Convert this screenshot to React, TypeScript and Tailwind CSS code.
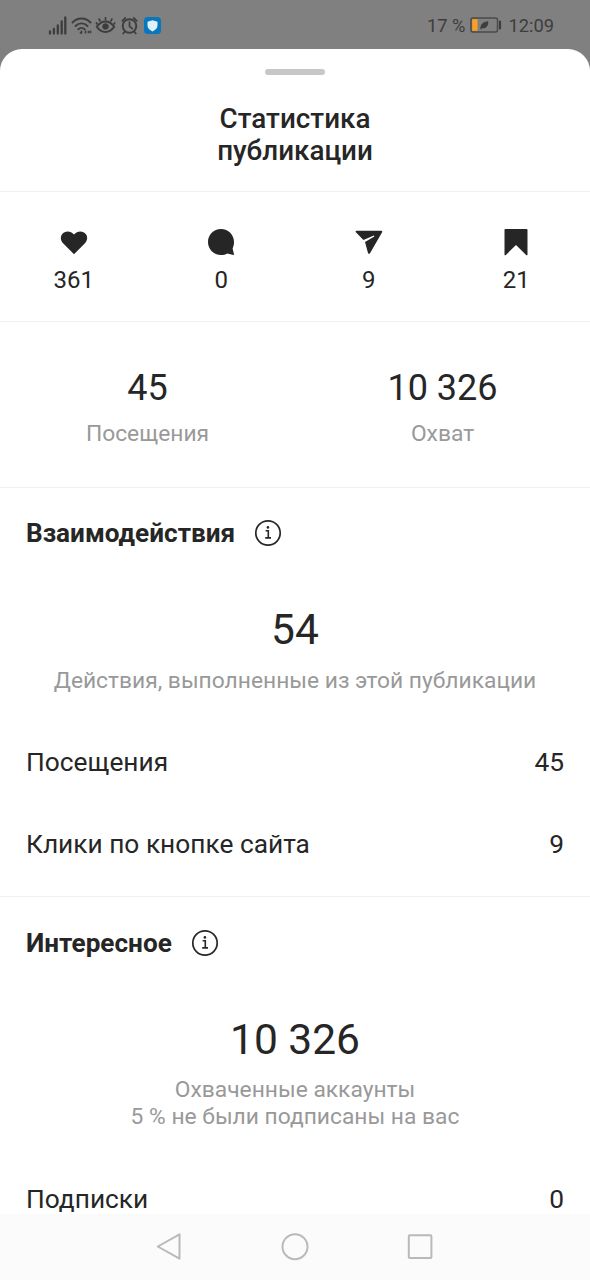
import React from "react";

interface RowProps {
  label: string;
  value: string;
}

const InfoIcon = () => (
  <svg width="28" height="28" viewBox="0 0 28 28" fill="none" stroke="#262626">
    <circle cx="14" cy="14" r="12.2" strokeWidth="1.7" />
    <path d="M11.6 11.8h2.7v7M11.2 18.9h5.8" strokeWidth="1.6" />
    <circle cx="13.9" cy="8.4" r="1.3" fill="#262626" stroke="none" />
  </svg>
);

const SectionTitle = ({ children }: { children: React.ReactNode }) => (
  <div className="flex h-[28px] items-center gap-[19px] px-[26px]">
    <h2 className="text-[26.15px] leading-[28px] font-bold">{children}</h2>
    <InfoIcon />
  </div>
);

const Row: React.FC<RowProps> = ({ label, value }) => (
  <div className="flex h-[82px] items-center justify-between px-[26px] text-[26.3px]">
    <span>{label}</span>
    <span>{value}</span>
  </div>
);

const StatusBar = () => (
  <div className="flex h-[49px] shrink-0 items-center justify-between pl-[48px] pr-[36px] text-[18.3px] text-[#3d3d3d]">
    <div className="flex items-center pt-[1px]">
      <svg width="114" height="24" viewBox="0 0 114 24" fill="none" stroke="#3d3d3d">
        <path d="M2 20.5v-2M5.9 20.5v-4.5M9.8 20.5v-8M13.7 20.5V8.5M17.3 20.5V4.5" strokeWidth="2.3" strokeLinecap="round" />
        <path d="M24.5 9.5c5-5.3 13-5.3 18 0M27.5 13c3.4-3.5 8.7-3.5 12 0M30.3 16.3c1.8-1.7 4.6-1.7 6.4 0" strokeWidth="1.9" strokeLinecap="round" />
        <path d="M33.5 17.5v3M32 19.2l1.5 1.6M37.5 20.5v-3M40.5 17.8v2.4M42.5 17.8v2.4" strokeWidth="1.6" />
        <path d="M48.8 13.8c4.8-7.2 12.6-7.2 17.4 0c-4.8 7-12.6 7-17.4 0Z" strokeWidth="2" />
        <circle cx="57.5" cy="13.5" r="2.8" fill="#3d3d3d" />
        <path d="M57.5 7.5V4M52.5 8.5l-1.8-3M62.5 8.5l1.8-3M49.4 11.5l-1.4-2.2M65.8 11.5l1.2-2.2" strokeWidth="1.6" />
        <circle cx="81.5" cy="13" r="6.8" strokeWidth="1.9" />
        <path d="M81.5 9v4.3l2.8 2.3M74.3 7.8l3-3M88.7 7.8l-3-3M76.7 18.5l-1.5 2M86.3 18.5l1.5 2" strokeWidth="1.7" strokeLinecap="round" />
        <rect x="96" y="4" width="17" height="17" rx="3.5" fill="#0877bd" stroke="none" />
        <path d="M104.5 7.2l5 1.6v3.8c0 2.8-2.2 4.5-5 5.8c-2.8-1.3-5-3-5-5.8V8.8Z" fill="#dff2fc" stroke="none" />
      </svg>
    </div>
    <div className="flex items-center pt-[2px]">
      <span>17 %</span>
      <svg className="mr-[6px] ml-[5px]" width="32" height="17" viewBox="0 0 32 17" fill="none">
        <rect x="1" y="1" width="26.5" height="14" rx="2" stroke="#4a4a4a" strokeWidth="1.5" />
        <rect x="2.2" y="2.2" width="5.3" height="11.6" fill="#fb9f22" />
        <path d="M10.3 12c.2-5.2 2.8-7.3 8-7.8c.2 4.8-2.2 7.5-6.4 7.1l-.8 1.2Z" fill="#3d3d3d" />
        <path d="M30 3.7v8.6" stroke="#3d3d3d" strokeWidth="2.2" />
      </svg>
      <span>12:09</span>
    </div>
  </div>
);

const reactions = [
  {
    value: "361",
    icon: <path d="M15 27.2L4.3 16.5C1.6 13.7 1 10 3.1 7.2C5.8 3.6 11.5 3.5 15 7.4C18.5 3.5 24.2 3.6 26.9 7.2C29 10 28.4 13.7 25.7 16.5Z" />,
  },
  {
    value: "0",
    icon: <path d="M15 2C7.6 2 2 7.7 2 15s5.7 13 13 13c2.3 0 4.5-.5 6.3-1.6l6 1.5c.5.1.8-.2.7-.7l-1.4-5.7C27.5 19.6 28 17.3 28 15C28 7.7 22.4 2 15 2Z" />,
  },
  {
    value: "9",
    icon: <path d="M2.5 3.7h24.8c.9 0 1.3.8.8 1.5L16 26.3c-.5.9-1.7.7-2-.3L11 15l9.4-5.4l-.6-1.1l-10.4 4.4l-7.5-7.7c-.6-.6-.3-1.5.6-1.5Z" />,
  },
  {
    value: "21",
    icon: <path d="M4.5 2h21c.7 0 1 .4 1 1v24.4c0 .9-.8 1.1-1.4.5L15 18.1L4.9 27.9c-.6.6-1.4.4-1.4-.5V3c0-.6.3-1 1-1Z" />,
  },
];

const App: React.FC = () => {
  return (
    <div className="flex h-[1280px] w-[590px] flex-col overflow-hidden bg-[#808080] font-['Roboto',sans-serif] text-[#262626]">
      <StatusBar />

      <main className="min-h-0 flex-1 overflow-hidden rounded-t-[22px] bg-white">
        <header className="flex h-[143px] flex-col items-center border-b border-[#efefef] pt-[20px]">
          <div className="h-[6px] w-[60px] rounded-full bg-[#c7c7c7]" />
          <h1 className="mt-[28px] text-center text-[27.8px] leading-[32px] font-medium">
            Статистика
            <br />
            публикации
          </h1>
        </header>

        <div className="grid h-[130px] grid-cols-4 border-b border-[#efefef] pt-[35px]">
          {reactions.map((item) => (
            <div key={item.value} className="flex flex-col items-center">
              <svg width="30" height="30" viewBox="0 0 30 30" fill="#262626">
                {item.icon}
              </svg>
              <span className="mt-[8px] text-[24px] leading-[30px]">{item.value}</span>
            </div>
          ))}
        </div>

        <div className="grid h-[166px] grid-cols-2 border-b border-[#efefef] pt-[45px] text-center">
          <div>
            <p className="text-[36px] leading-[42px]">45</p>
            <p className="mt-[11px] text-[22.8px] leading-[28px] text-[#999]">Посещения</p>
          </div>
          <div>
            <p className="text-[36px] leading-[42px]">10 326</p>
            <p className="mt-[11px] text-[22.8px] leading-[28px] text-[#999]">Охват</p>
          </div>
        </div>

        <section className="h-[409px] border-b border-[#efefef] pt-[31px]">
          <SectionTitle>Взаимодействия</SectionTitle>
          <div className="mt-[58px] mb-[27px] text-center">
            <p className="text-[42.5px] leading-[50px]">54</p>
            <p className="mt-[12px] text-[22.8px] leading-[28px] text-[#999]">
              Действия, выполненные из этой публикации
            </p>
          </div>
          <Row label="Посещения" value="45" />
          <Row label="Клики по кнопке сайта" value="9" />
        </section>

        <section className="pt-[32px]">
          <SectionTitle>Интересное</SectionTitle>
          <div className="mt-[58px] mb-[29px] text-center">
            <p className="text-[42.5px] leading-[50px]">10 326</p>
            <p className="mt-[11px] text-[22.8px] leading-[27px] text-[#999]">
              Охваченные аккаунты
              <br />5 % не были подписаны на вас
            </p>
          </div>
          <Row label="Подписки" value="0" />
        </section>
      </main>

      <nav className="flex h-[66px] shrink-0 items-center justify-center gap-[97px] bg-[#fbfbfb]">
        <svg width="28" height="28" viewBox="0 0 28 28" fill="none" stroke="#b9b9b9" strokeWidth="2" strokeLinejoin="round">
          <path d="M23.5 1.3v24.4L1.8 13.5Z" />
        </svg>
        <svg width="28" height="28" viewBox="0 0 28 28" fill="none" stroke="#b9b9b9" strokeWidth="2">
          <circle cx="14" cy="13.7" r="12.5" />
        </svg>
        <svg width="28" height="28" viewBox="0 0 28 28" fill="none" stroke="#b9b9b9" strokeWidth="2">
          <rect x="2.8" y="2.3" width="22.6" height="22.6" rx="1" />
        </svg>
      </nav>
    </div>
  );
};

export default App;
